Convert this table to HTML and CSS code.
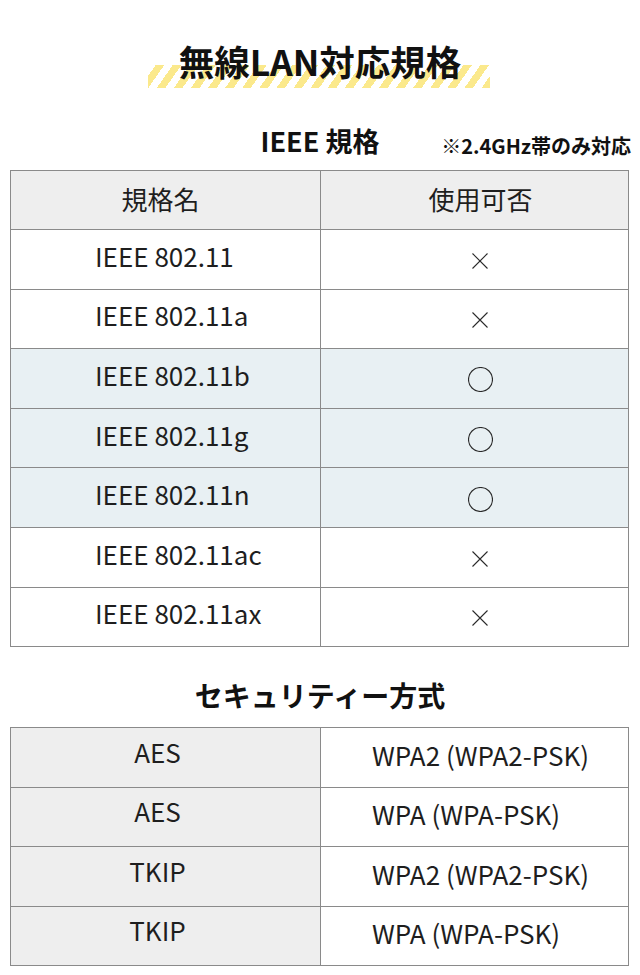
FILE: index.html
```html
<!DOCTYPE html>
<html lang="ja">
<head>
<meta charset="utf-8">
<link rel="stylesheet" href="styles.css">
</head>
<body>
<div class="page">
  <div class="title-wrap">
    <div class="stripe"></div>
    <h1 class="title">無線LAN対応規格</h1>
  </div>

  <div class="sub-head">
    <h2 class="sub-title">IEEE 規格</h2>
    <span class="note">※2.4GHz帯のみ対応</span>
  </div>

  <table class="spec">
    <thead>
      <tr><th class="c1">規格名</th><th class="c2">使用可否</th></tr>
    </thead>
    <tbody>
      <tr><td class="c1">IEEE 802.11</td><td class="c2"><svg class="mark" viewBox="0 0 24 24"><path d="M3 3L21 21M21 3L3 21"/></svg></td></tr>
      <tr><td class="c1">IEEE 802.11a</td><td class="c2"><svg class="mark" viewBox="0 0 24 24"><path d="M3 3L21 21M21 3L3 21"/></svg></td></tr>
      <tr class="ok"><td class="c1">IEEE 802.11b</td><td class="c2"><svg class="mark" viewBox="0 0 24 24"><circle cx="12" cy="12" r="11.5"/></svg></td></tr>
      <tr class="ok"><td class="c1">IEEE 802.11g</td><td class="c2"><svg class="mark" viewBox="0 0 24 24"><circle cx="12" cy="12" r="11.5"/></svg></td></tr>
      <tr class="ok"><td class="c1">IEEE 802.11n</td><td class="c2"><svg class="mark" viewBox="0 0 24 24"><circle cx="12" cy="12" r="11.5"/></svg></td></tr>
      <tr><td class="c1">IEEE 802.11ac</td><td class="c2"><svg class="mark" viewBox="0 0 24 24"><path d="M3 3L21 21M21 3L3 21"/></svg></td></tr>
      <tr><td class="c1">IEEE 802.11ax</td><td class="c2"><svg class="mark" viewBox="0 0 24 24"><path d="M3 3L21 21M21 3L3 21"/></svg></td></tr>
    </tbody>
  </table>

  <h2 class="sec-title">セキュリティー方式</h2>

  <table class="sec">
    <tbody>
      <tr><td class="c1">AES</td><td class="c2">WPA2 (WPA2-PSK)</td></tr>
      <tr><td class="c1">AES</td><td class="c2">WPA (WPA-PSK)</td></tr>
      <tr><td class="c1">TKIP</td><td class="c2">WPA2 (WPA2-PSK)</td></tr>
      <tr><td class="c1">TKIP</td><td class="c2">WPA (WPA-PSK)</td></tr>
    </tbody>
  </table>
</div>
</body>
</html>
```

FILE: styles.css
```css
* { box-sizing: border-box; }
html, body {
  margin: 0;
  padding: 0;
  background: #fff;
}
body {
  font-family: "Noto Sans CJK JP", "Noto Sans", sans-serif;
  color: #1a1a1a;
}
.page {
  width: 640px;
  padding: 36px 10px 0 10px;
}
.title-wrap {
  position: relative;
  height: 56px;
  display: flex;
  justify-content: center;
}
.stripe {
  position: absolute;
  left: 138px;
  width: 342px;
  top: 29px;
  height: 23px;
  background: repeating-linear-gradient(
    -55deg,
    #fbe98c 0 7px,
    #ffffff 7px 14px
  );
}
.title {
  position: relative;
  margin: 0;
  font-size: 35.5px;
  font-weight: 700;
  line-height: 50px;
  letter-spacing: 0;
  color: #111;
}
.sub-head {
  position: relative;
  height: 78px;
  display: flex;
  justify-content: center;
  align-items: flex-start;
  padding-top: 31px;
}
.sub-title {
  margin: 0;
  font-size: 27px;
  font-weight: 700;
  line-height: 36px;
  color: #111;
}
.note {
  position: absolute;
  right: -1px;
  top: 40px;
  font-size: 20px;
  font-weight: 700;
  color: #111;
  line-height: 28px;
}
table {
  width: 619px;
  border-collapse: collapse;
  table-layout: fixed;
}
th, td {
  border: 1px solid #8a8a8a;
  padding: 0;
  font-size: 26px;
  font-weight: 400;
  color: #1e1e1e;
  vertical-align: middle;
}
.spec .c1 { width: 310px; }
.spec th {
  height: 59px;
  background: #eeeeee;
  text-align: center;
  padding-bottom: 4px;
}
.spec th.c1 { padding-right: 10px; }
.spec th.c2 { padding-left: 12px; }
.spec td { height: 59.6px; padding-bottom: 8px; }
.spec td.c1 { padding-left: 84px; }
.spec td.c2 { text-align: center; padding-left: 11px; padding-bottom: 6px; }
.spec tr.ok td { background: #e8f0f3; }
.mark {
  display: inline-block;
  vertical-align: middle;
  width: 20px;
  height: 20px;
  fill: none;
  stroke: #2a2a2a;
  stroke-width: 1.3;
}
.spec tr.ok .mark { width: 25px; height: 25px; stroke-width: 1.1; }
.sec-title {
  margin: 0;
  height: 80px;
  padding-top: 29px;
  text-align: center;
  font-size: 28px;
  font-weight: 700;
  line-height: 38px;
  color: #111;
}
.sec td { height: 59.5px; padding-bottom: 6px; }
.sec .c1 {
  width: 310px;
  background: #eeeeee;
  text-align: center;
  padding-right: 16px;
  padding-bottom: 12px;
}
.sec .c2 {
  padding-left: 51px;
}
```
